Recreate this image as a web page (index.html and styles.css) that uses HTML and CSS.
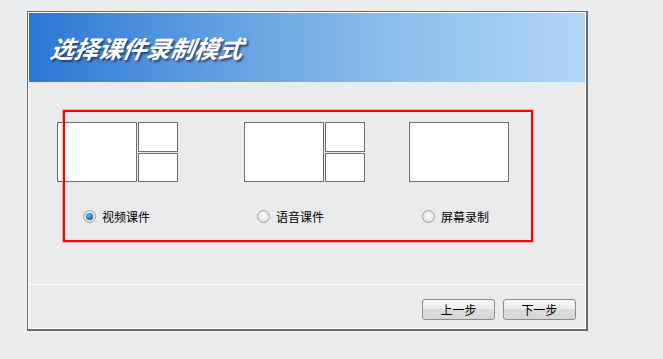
FILE: index.html
```html
<!DOCTYPE html>
<html lang="zh-CN">
<head>
<meta charset="utf-8">
<title>选择课件录制模式</title>
<link rel="stylesheet" href="styles.css">
</head>
<body>
<div class="dialog">
  <div class="inner">
    <div class="header"><h1 class="title">选择课件录制模式</h1></div>
    <div class="body">
      <div class="options">
        <div class="option opt-video">
          <div class="pic">
            <div class="pane big"></div>
            <div class="stack">
              <div class="pane small"></div>
              <div class="pane small low"></div>
            </div>
          </div>
          <label class="choice"><span class="radio checked"></span><span class="label">视频课件</span></label>
        </div>
        <div class="option opt-audio">
          <div class="pic">
            <div class="pane big"></div>
            <div class="stack">
              <div class="pane small"></div>
              <div class="pane small low"></div>
            </div>
          </div>
          <label class="choice"><span class="radio"></span><span class="label">语音课件</span></label>
        </div>
        <div class="option opt-screen">
          <div class="pic">
            <div class="pane wide"></div>
          </div>
          <label class="choice"><span class="radio"></span><span class="label">屏幕录制</span></label>
        </div>
      </div>
      <div class="highlight"></div>
    </div>
    <div class="footer">
      <button class="btn">上一步</button>
      <button class="btn">下一步</button>
    </div>
  </div>
</div>
</body>
</html>
```
FILE: styles.css
```css
html, body {
  margin: 0;
  padding: 0;
  background: #ebecee;
  font-family: "Noto Sans CJK SC", "Noto Sans", sans-serif;
}
.dialog {
  margin: 11px 0 0 27px;
  width: 561px;
  box-sizing: border-box;
  border-style: solid;
  border-color: #6b6b6b;
  border-width: 1px 2px 2px 1px;
  background: #eaebed;
}
.inner {
  border: 1px solid #ffffff;
}
.header {
  height: 69px;
  background: linear-gradient(to right, #2c76d5 0%, #5a9be0 30%, #8dbdec 65%, #b2d5f4 100%);
  display: flex;
  align-items: center;
  padding-left: 22px;
}
.title {
  margin: 0;
  color: #ffffff;
  font-size: 24px;
  font-weight: 700;
  font-style: italic;
  letter-spacing: 0;
  line-height: 1;
  transform: skewX(-10deg);
  text-shadow: 2px 2px 2px rgba(40, 40, 60, 0.75);
}
.body {
  height: 202px;
  position: relative;
  box-sizing: border-box;
  padding: 40px 0 0 28px;
}
.options {
  display: flex;
}
.option {
  display: flex;
  flex-direction: column;
}
.opt-video { width: 187px; }
.opt-audio { width: 165px; }
.pic {
  display: flex;
  gap: 1px;
  height: 60px;
}
.stack {
  display: flex;
  flex-direction: column;
  gap: 1px;
}
.pane {
  box-sizing: border-box;
  border: 1px solid #6e6e6e;
  background: #ffffff;
}
.big { width: 80px; height: 60px; }
.small { width: 40px; height: 30px; }
.small.low { height: 29px; }
.wide { width: 100px; height: 60px; }
.choice {
  display: flex;
  align-items: center;
  margin-top: 28px;
  height: 13px;
  font-size: 12px;
  color: #000000;
}
.opt-video .choice { margin-left: 26px; }
.opt-audio .choice, .opt-screen .choice { margin-left: 13px; }
.radio {
  width: 13px;
  height: 13px;
  box-sizing: border-box;
  border-radius: 50%;
  border: 1px solid #a3a3a3;
  background: radial-gradient(circle at 50% 45%, #ffffff 0%, #f2f2f2 35%, #c9c9c9 100%);
  margin-right: 6px;
  flex: none;
  display: flex;
  align-items: center;
  justify-content: center;
}
.radio.checked::after {
  content: "";
  width: 7px;
  height: 7px;
  border-radius: 50%;
  background: radial-gradient(circle at 40% 35%, #6fb8ee 0%, #1f78c8 50%, #0b4a90 100%);
}
.label {
  line-height: 13px;
}
.highlight {
  position: absolute;
  left: 34px;
  top: 28px;
  width: 470px;
  height: 132px;
  box-sizing: border-box;
  border: 2px solid #ff0000;
  box-shadow: 0 0 0 1px rgba(255, 80, 80, 0.35);
  pointer-events: none;
}
.footer {
  border-top: 1px solid #ffffff;
  height: 44px;
  display: flex;
  justify-content: flex-end;
  align-items: flex-start;
  gap: 8px;
  padding: 14px 9px 0 0;
  box-sizing: border-box;
}
.btn {
  width: 73px;
  height: 21px;
  box-sizing: border-box;
  border: 1px solid #8c8c8c;
  border-radius: 3px;
  background: linear-gradient(to bottom, #f7f7f7 0%, #ececec 45%, #dcdcdc 50%, #d6d6d6 100%);
  font-family: "Noto Sans CJK SC", "Noto Sans", sans-serif;
  font-size: 12px;
  color: #000000;
  padding: 0;
  line-height: 19px;
}
```
